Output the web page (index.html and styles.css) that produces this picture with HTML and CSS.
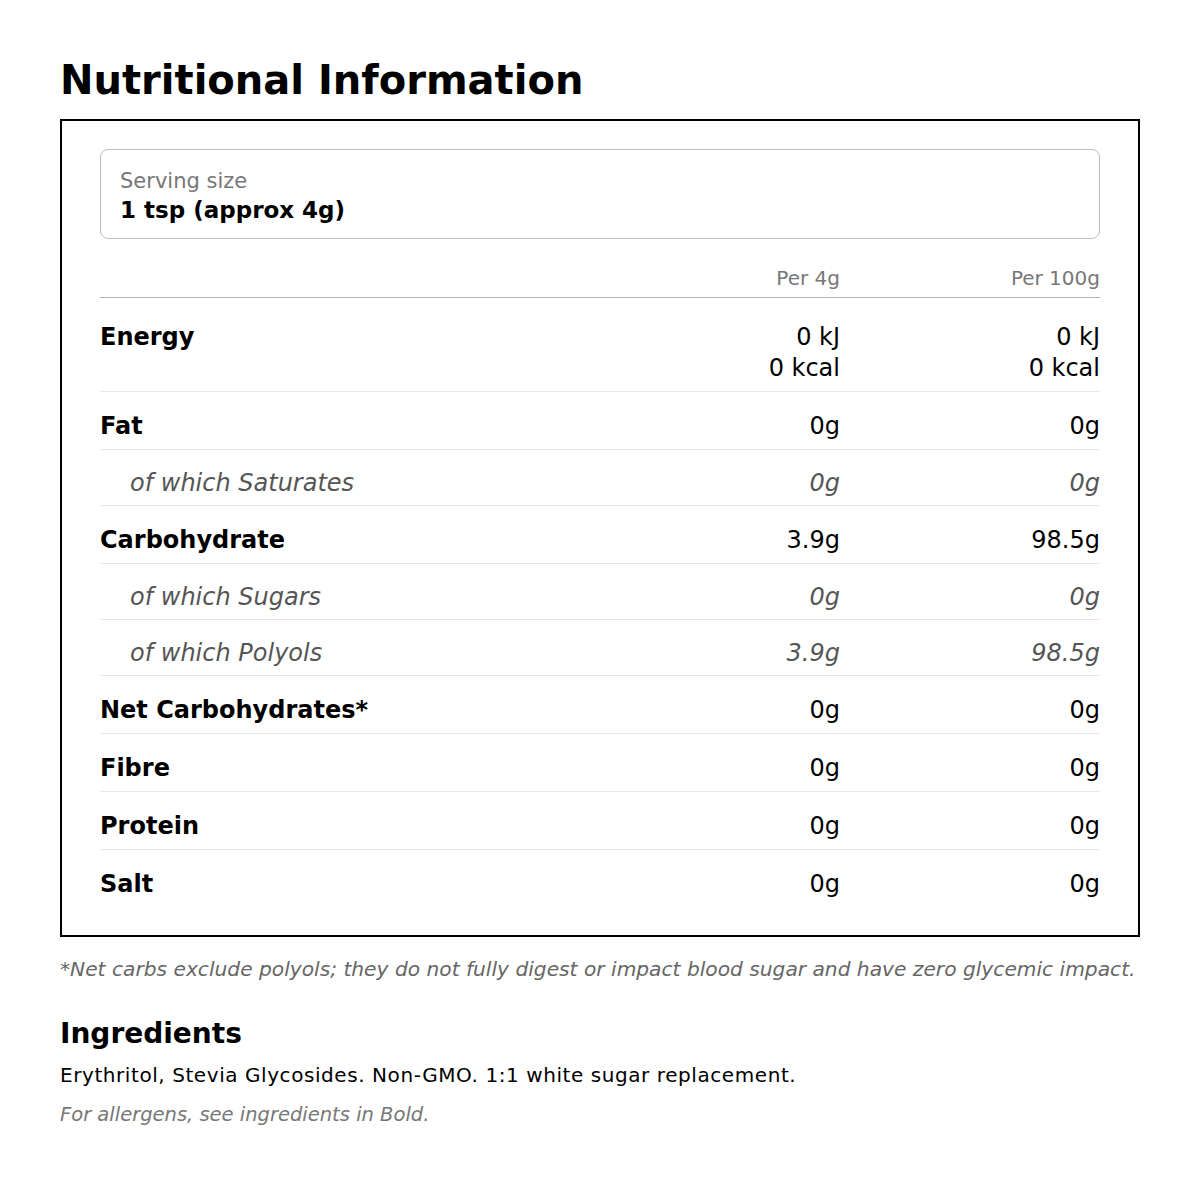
FILE: index.html
```html
<!DOCTYPE html>
<html lang="en">
<head>
<meta charset="utf-8">
<title>Nutritional Information</title>
<link rel="stylesheet" href="styles.css">
</head>
<body>
<main class="page">
  <h1 class="title">Nutritional Information</h1>
  <section class="panel">
    <div class="serving">
      <div class="serving-label">Serving size</div>
      <div class="serving-value">1 tsp (approx 4g)</div>
    </div>
    <div class="table">
      <div class="row head"><span></span><span class="num">Per 4g</span><span class="num">Per 100g</span></div>
      <div class="row main energy"><span class="name">Energy</span><span class="num">0 kJ<br>0 kcal</span><span class="num">0 kJ<br>0 kcal</span></div>
      <div class="row main"><span class="name">Fat</span><span class="num">0g</span><span class="num">0g</span></div>
      <div class="row sub"><span class="name">of which Saturates</span><span class="num">0g</span><span class="num">0g</span></div>
      <div class="row main"><span class="name">Carbohydrate</span><span class="num">3.9g</span><span class="num">98.5g</span></div>
      <div class="row sub"><span class="name">of which Sugars</span><span class="num">0g</span><span class="num">0g</span></div>
      <div class="row sub"><span class="name">of which Polyols</span><span class="num">3.9g</span><span class="num">98.5g</span></div>
      <div class="row main"><span class="name">Net Carbohydrates*</span><span class="num">0g</span><span class="num">0g</span></div>
      <div class="row main"><span class="name">Fibre</span><span class="num">0g</span><span class="num">0g</span></div>
      <div class="row main"><span class="name">Protein</span><span class="num">0g</span><span class="num">0g</span></div>
      <div class="row main last"><span class="name">Salt</span><span class="num">0g</span><span class="num">0g</span></div>
    </div>
  </section>
  <p class="footnote">*Net carbs exclude polyols; they do not fully digest or impact blood sugar and have zero glycemic impact.</p>
  <h2 class="ing-title">Ingredients</h2>
  <p class="ing-text">Erythritol, Stevia Glycosides. Non-GMO. 1:1 white sugar replacement.</p>
  <p class="allergen">For allergens, see ingredients in Bold.</p>
</main>
</body>
</html>
```
FILE: styles.css
```css
* { box-sizing: border-box; }

body {
  margin: 0;
  background: #ffffff;
  color: #000000;
  font-family: "DejaVu Sans", "Noto Sans", sans-serif;
}

.page {
  width: 1080px;
  margin: 0 0 0 60px;
  padding-top: 56px;
}

.title {
  margin: 0 0 15px 0;
  font-size: 40px;
  line-height: 48px;
  font-weight: 700;
  color: #000;
}

.panel {
  border: 2px solid #000;
  padding: 28px 38px;
}

.serving {
  border: 1px solid #bdbdbd;
  border-radius: 8px;
  padding: 20px 19px 14px;
}

.serving-label {
  font-size: 21px;
  line-height: 22px;
  color: #777;
}

.serving-value {
  margin-top: 4px;
  font-size: 23px;
  line-height: 28px;
  font-weight: 700;
  color: #000;
}

.row {
  display: grid;
  grid-template-columns: 1fr 260px 260px;
  align-items: start;
}

.num { text-align: right; }

.head {
  margin-top: 27px;
  padding-bottom: 7px;
  border-bottom: 1px solid #b0b0b0;
  font-size: 20px;
  line-height: 24px;
  color: #777;
}

.main,
.sub {
  font-size: 24px;
  line-height: 30px;
  border-bottom: 1px solid #e6e6e6;
}

.main {
  padding: 19px 0 8px;
  color: #000;
}

.main .name { font-weight: 700; }

.energy {
  padding: 24px 0 7px;
  line-height: 31px;
}

.sub {
  padding: 18px 0 7px;
  font-style: italic;
  color: #555;
}

.sub .name { padding-left: 30px; }

.last { border-bottom: none; }

.footnote {
  margin: 20px 0 0 0;
  font-size: 20.2px;
  line-height: 24px;
  font-style: italic;
  color: #666;
}

.ing-title {
  margin: 35px 0 0 0;
  font-size: 28px;
  line-height: 36px;
  font-weight: 700;
  color: #000;
}

.ing-text {
  margin: 11px 0 0 0;
  font-size: 20px;
  line-height: 24px;
  letter-spacing: 0.57px;
  color: #000;
}

.allergen {
  margin: 17px 0 0 0;
  font-size: 19.5px;
  line-height: 22px;
  font-style: italic;
  color: #777;
}
```
